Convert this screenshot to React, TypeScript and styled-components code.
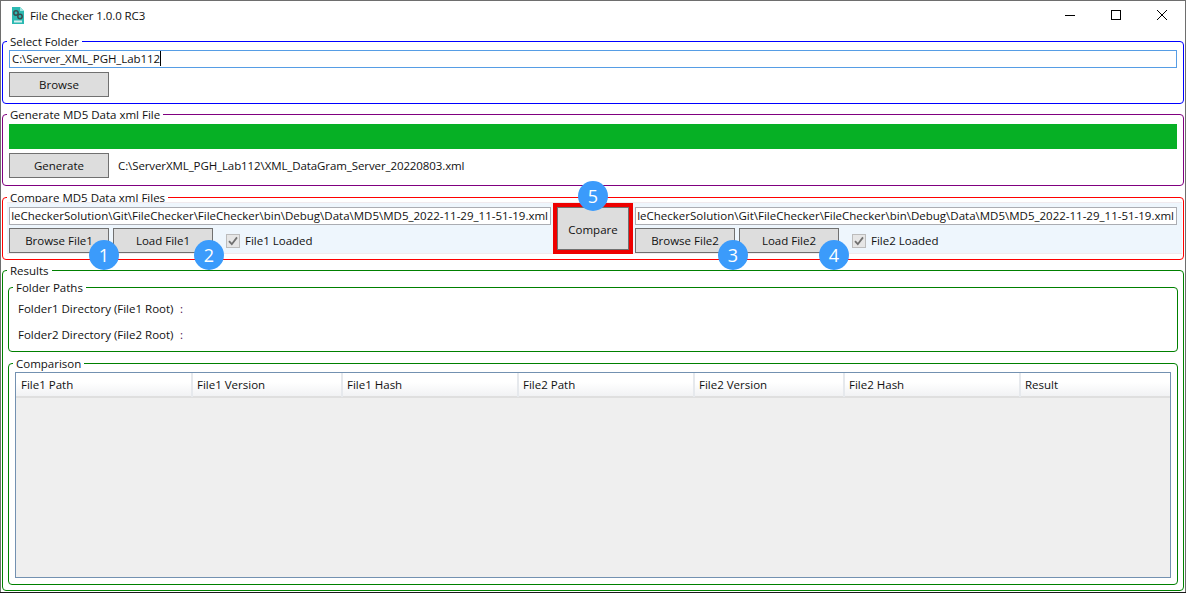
import React from 'react'
import styled, { createGlobalStyle } from 'styled-components'

const GlobalStyle = createGlobalStyle`
  html, body {
    margin: 0;
    padding: 0;
    background: #1a1a1a;
  }
  body {
    font-family: 'Open Sans', 'Liberation Sans', sans-serif;
    font-size: 11.5px;
    color: #111;
  }
`

const Window = styled.div`
  box-sizing: border-box;
  width: 1186px;
  height: 592px;
  background: #fff;
  border: 1px solid #6e6e6e;
  border-bottom: 0;
  display: flex;
  flex-direction: column;
`

const TitleBar = styled.header`
  box-sizing: border-box;
  height: 32px;
  display: flex;
  align-items: center;
  padding: 0 0 4px 10px;
  flex: none;
`

const Title = styled.span`
  margin-left: 5px;
  font-size: 11.5px;
  letter-spacing: -0.1px;
  flex: 1;
`

const WindowButton = styled.div`
  width: 46px;
  height: 28px;
  display: flex;
  align-items: center;
  justify-content: center;
`

const Group = styled.fieldset<{ $color: string; $height?: number; $top?: number }>`
  box-sizing: border-box;
  margin: ${p => p.$top ?? 0}px 1px 0 1px;
  padding: 0 6px;
  min-width: 0;
  border: 1px solid ${p => p.$color};
  border-radius: 4px;
  height: ${p => (p.$height ? `${p.$height}px` : 'auto')};
  flex: ${p => (p.$height ? 'none' : '1 1 0')};
  display: flex;
  flex-direction: column;
`

const ResultsGroup = styled(Group)`
  margin-bottom: 1px;
  padding-bottom: 5px;
  padding-right: 5px;
`

const NestedGroup = styled(Group)`
  margin-left: -1px;
  margin-right: 0;
`

const Legend = styled.legend`
  box-sizing: border-box;
  padding: 2px 3px 0;
  margin-left: -2px;
  line-height: 14px;
  height: 16px;
  color: #111;
`

const Field = styled.div<{ $end?: boolean }>`
  box-sizing: border-box;
  height: 18px;
  line-height: 15px;
  padding: 0 2px;
  border: 1px solid #abadb3;
  background: #fff;
  white-space: nowrap;
  overflow: hidden;
  display: flex;
  justify-content: ${p => (p.$end ? 'flex-end' : 'flex-start')};
`

const FolderField = styled(Field)`
  margin-top: 1px;
  border-color: #569de5;
  letter-spacing: -0.08px;
`

const Caret = styled.span`
  display: inline-block;
  width: 1px;
  height: 15px;
  background: #000;
`

const Button = styled.button<{ $fill?: boolean }>`
  box-sizing: border-box;
  width: ${p => (p.$fill ? '100%' : '100px')};
  height: ${p => (p.$fill ? '100%' : '25px')};
  flex: none;
  padding: ${p => (p.$fill ? '2px 0 0' : '0')};
  border: 1px solid #707070;
  background: #dddddd;
  color: #111;
  font: inherit;
`

const Progress = styled.div`
  height: 25px;
  flex: none;
  background: #06b025;
  margin-top: 2px;
`

const Row = styled.div<{ $top?: number }>`
  display: flex;
  align-items: center;
  gap: 4px;
  margin-top: ${p => p.$top ?? 0}px;
`

const FileName = styled.span`
  margin-left: 5px;
  letter-spacing: -0.1px;
`

const ComparePanel = styled.div`
  box-sizing: border-box;
  height: 52px;
  margin: -3px -5px 0 -2px;
  padding: 4px 1px 0 2px;
  background: #eef6fd;
  border-top: 1px solid #f0eaee;
  border-bottom: 1px solid #f0eaee;
  display: grid;
  grid-template-columns: 542px 80px 542px;
  gap: 2px;
`

const FileColumn = styled.div`
  min-width: 0;
`

const Slot = styled.div`
  position: relative;
  flex: none;
`

const CompareSlot = styled(Slot)`
  box-sizing: border-box;
  height: 51px;
  margin-top: -4px;
  border: 4px solid #ee0000;
`

const Badge = styled.span<{ $left: number; $top: number }>`
  position: absolute;
  left: ${p => p.$left}px;
  top: ${p => p.$top}px;
  z-index: 2;
  width: 30px;
  height: 30px;
  border-radius: 50%;
  background: #3b9bfb;
  color: #fff;
  font-size: 18px;
  line-height: 30px;
  text-align: center;
`

const CheckLabel = styled.div`
  display: flex;
  align-items: center;
  gap: 5px;
  margin-left: 9px;
`

const CheckBox = styled.span`
  box-sizing: border-box;
  width: 14px;
  height: 14px;
  border: 1px solid #bcbcbc;
  background: #e6e6e6;
  display: flex;
  align-items: center;
  justify-content: center;
`

const PathRows = styled.div`
  margin-top: 1px;
  padding-left: 3px;
`

const PathRow = styled.div`
  height: 26px;
  line-height: 26px;
  display: flex;
`

const PathLabel = styled.span`
  width: 162px;
`

const Colon = styled.span`
  color: #4b104b;
`

const Table = styled.div`
  flex: 1;
  margin: 1px 0 6px;
  border: 1px solid #7391b1;
  background: #efefef;
  display: flex;
  flex-direction: column;
`

const HeaderRow = styled.div`
  display: grid;
  grid-template-columns: 176px 150px 176px 176px 150px 176px 1fr;
  height: 25px;
  box-sizing: border-box;
  background: linear-gradient(#ffffff 0%, #ffffff 40%, #f1f2f4 100%);
  border-bottom: 2px solid #dfdfdf;
`

const HeaderCell = styled.div`
  box-sizing: border-box;
  margin-left: -1px;
  padding-left: 4px;
  line-height: 24px;
  border-left: 2px solid #e6e9ed;

  &:first-child {
    margin-left: 0;
    padding-left: 5px;
    border-left: 0;
  }
`

const columns = ['File1 Path', 'File1 Version', 'File1 Hash', 'File2 Path', 'File2 Version', 'File2 Hash', 'Result']

const longPath = 'leCheckerSolution\\Git\\FileChecker\\FileChecker\\bin\\Debug\\Data\\MD5\\MD5_2022-11-29_11-51-19.xml'

const AppIcon = () => (
  <svg width="14" height="17" viewBox="0 0 14 17">
    <path d="M1 0h8l4 4v13H1z" fill="#2cb9b2" />
    <path d="M9 0l4 4H9z" fill="#9be6e0" />
    <circle cx="5" cy="6" r="2.2" fill="none" stroke="#3a4c4f" strokeWidth="1.5" />
    <circle cx="9" cy="9.5" r="2.2" fill="none" stroke="#3a4c4f" strokeWidth="1.5" />
    <rect x="3" y="13.5" width="8" height="2" fill="#d7eeee" />
  </svg>
)

const MinimizeIcon = () => (
  <svg width="10" height="10" viewBox="0 0 10 10">
    <path d="M0 5.5h10" stroke="#000" strokeWidth="1" />
  </svg>
)

const MaximizeIcon = () => (
  <svg width="10" height="10" viewBox="0 0 10 10">
    <rect x="0.5" y="0.5" width="9" height="9" fill="none" stroke="#000" />
  </svg>
)

const CloseIcon = () => (
  <svg width="10" height="10" viewBox="0 0 10 10">
    <path d="M0 0l10 10M10 0L0 10" stroke="#000" strokeWidth="1" />
  </svg>
)

const CheckMark = () => (
  <svg width="10" height="10" viewBox="0 0 10 10">
    <path d="M1 5.2l2.8 3L9 1.4" fill="none" stroke="#707070" strokeWidth="1.8" />
  </svg>
)

type FileSideProps = {
  index: number
  browseBadge: { label: string; left: number }
  loadBadge: { label: string; left: number }
}

const FileSide: React.FC<FileSideProps> = ({ index, browseBadge, loadBadge }) => (
  <FileColumn>
    <Field $end>{longPath}</Field>
    <Row $top={3}>
      <Slot>
        <Button>Browse File{index}</Button>
        <Badge $left={browseBadge.left} $top={12}>{browseBadge.label}</Badge>
      </Slot>
      <Slot>
        <Button>Load File{index}</Button>
        <Badge $left={loadBadge.left} $top={12}>{loadBadge.label}</Badge>
      </Slot>
      <CheckLabel>
        <CheckBox>
          <CheckMark />
        </CheckBox>
        File{index} Loaded
      </CheckLabel>
    </Row>
  </FileColumn>
)

const App = () => (
  <Window>
    <GlobalStyle />
    <TitleBar>
      <AppIcon />
      <Title>File Checker 1.0.0 RC3</Title>
      <WindowButton><MinimizeIcon /></WindowButton>
      <WindowButton><MaximizeIcon /></WindowButton>
      <WindowButton><CloseIcon /></WindowButton>
    </TitleBar>

    <Group $color="#0000ff" $height={71}>
      <Legend>Select Folder</Legend>
      <FolderField>
        C:\Server_XML_PGH_Lab112<Caret />
      </FolderField>
      <Row $top={4}>
        <Button>Browse</Button>
      </Row>
    </Group>

    <Group $color="#800080" $height={80} $top={2}>
      <Legend>Generate MD5 Data xml File</Legend>
      <Progress />
      <Row $top={4}>
        <Button>Generate</Button>
        <FileName>C:\ServerXML_PGH_Lab112\XML_DataGram_Server_20220803.xml</FileName>
      </Row>
    </Group>

    <Group $color="#ff0000" $height={71} $top={3}>
      <Legend>Compare MD5 Data xml Files</Legend>
      <ComparePanel>
        <FileSide
          index={1}
          browseBadge={{ label: '1', left: 80 }}
          loadBadge={{ label: '2', left: 81 }}
        />
        <CompareSlot>
          <Button $fill>Compare</Button>
          <Badge $left={21} $top={-26}>5</Badge>
        </CompareSlot>
        <FileSide
          index={2}
          browseBadge={{ label: '3', left: 83 }}
          loadBadge={{ label: '4', left: 80 }}
        />
      </ComparePanel>
    </Group>

    <ResultsGroup $color="#008000" $top={2}>
      <Legend>Results</Legend>
      <NestedGroup $color="#008000" $height={73} $top={1}>
        <Legend>Folder Paths</Legend>
        <PathRows>
          <PathRow>
            <PathLabel>Folder1 Directory (File1 Root)</PathLabel>
            <Colon>:</Colon>
          </PathRow>
          <PathRow>
            <PathLabel>Folder2 Directory (File2 Root)</PathLabel>
            <Colon>:</Colon>
          </PathRow>
        </PathRows>
      </NestedGroup>
      <NestedGroup $color="#008000" $top={3}>
        <Legend>Comparison</Legend>
        <Table>
          <HeaderRow>
            {columns.map(name => (
              <HeaderCell key={name}>{name}</HeaderCell>
            ))}
          </HeaderRow>
        </Table>
      </NestedGroup>
    </ResultsGroup>
  </Window>
)

export default App
